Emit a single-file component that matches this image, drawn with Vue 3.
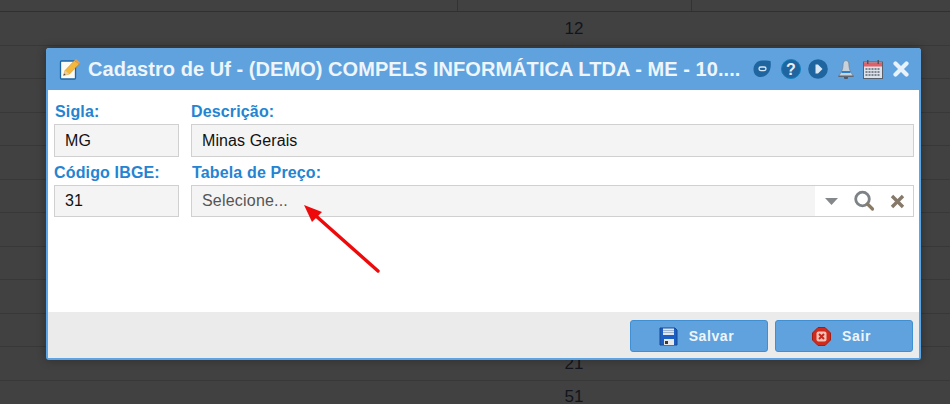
<template>
  <div class="page">
    <div class="table">
      <div class="row head">
        <div class="cell c1"></div>
        <div class="cell c2"></div>
        <div class="cell c3"></div>
      </div>
      <div v-for="(r, i) in rows" :key="i" class="row">
        <div class="num">{{ r }}</div>
      </div>
    </div>

    <div class="dialog">
      <div class="title">
        <svg class="ico-edit" width="22" height="22" viewBox="0 0 22 22">
          <rect x="1.500" y="3" width="15" height="18" rx="1" fill="#fbfbf6" stroke="#1c66a6" stroke-width="1.300" />
          <path d="M4.500 17.500l1.500-5L15.500 2.500 20 6l-9.500 10z" fill="#f3b83c" stroke="#c78a25" stroke-width=".5" />
          <path d="M15.500 2.500l1.500-1.500 4 3.500L20 6z" fill="#ec9c4e" />
          <path d="M4.500 17.500l1.500-5 4.500 3.500z" fill="#e8cfa0" />
          <path d="M4.500 17.500l.6-2 1.600 1.200z" fill="#5a4630" />
        </svg>
        <span class="title-text">Cadastro de Uf - (DEMO) COMPELS INFORMÁTICA LTDA - ME - 10....</span>
        <div class="tools">
          <svg width="18" height="18" viewBox="0 0 18 18">
            <path d="M9 .5c3 0 6-.5 8.500.5.500 3 .500 7-1 10-2 4-6 6.500-10 6C2.500 16.500.5 13 .5 9.500.5 4.500 4 .5 9 .5z" fill="#1f659f" />
            <rect x="6" y="7" width="7" height="3.600" rx="1.800" fill="none" stroke="#dce9f4" stroke-width="1.300" />
          </svg>
          <svg class="t-help" width="20" height="20" viewBox="0 0 20 20">
            <circle cx="10" cy="10" r="9.500" fill="#1f659f" stroke="#1180bd" />
            <text x="10" y="16" text-anchor="middle" class="q">?</text>
          </svg>
          <svg class="t-play" width="20" height="20" viewBox="0 0 20 20">
            <circle cx="10" cy="10" r="9.800" fill="#1f659f" />
            <path d="M7.500 5.500h2.500l4.500 4.500-4.500 4.500H7.500z" fill="#dbe9f5" />
          </svg>
          <svg class="t-bell" width="16" height="19" viewBox="0 0 16 19">
            <rect x="6" y="16" width="4" height="3" rx="1" fill="#4f5a66" />
            <path d="M8 .5c2.500 0 3 2.500 3 5.500 0 4 2.500 7 4.500 10.500H.5C2.500 13 5 10 5 6c0-3 .5-5.500 3-5.500z" fill="#c9d2da" stroke="#76818c" stroke-width=".7" />
            <rect x="3.500" y="11" width="9" height="2" fill="#2a7fd0" />
            <rect x=".5" y="15.500" width="15" height="1.500" fill="#5d6874" />
          </svg>
          <svg class="t-cal" width="20" height="19" viewBox="0 0 20 19">
            <rect x=".5" y="2" width="19" height="16.500" fill="#dde3ea" stroke="#59626c" />
            <rect x="1" y="2.500" width="18" height="4" fill="#e05f68" />
            <rect x="4" y="0" width="1.500" height="4" fill="#4e565f" />
            <rect x="14.500" y="0" width="1.500" height="4" fill="#4e565f" />
            <path d="M2.500 9h15M2.500 12h15M2.500 15h15" stroke="#5d6773" stroke-width="1.500" stroke-dasharray="2 1" />
          </svg>
          <svg class="t-close" width="16" height="16" viewBox="0 0 16 16">
            <path d="M2.500 2.500l11 11M13.500 2.500l-11 11" stroke="#e8f2fb" stroke-width="4.200" stroke-linecap="round" />
          </svg>
        </div>
      </div>

      <div class="body">
        <div class="form">
          <div class="field">
            <label class="lbl l-sigla">Sigla:</label>
            <div class="input">MG</div>
          </div>
          <div class="field">
            <label class="lbl">Descrição:</label>
            <div class="input">Minas Gerais</div>
          </div>
          <div class="field">
            <label class="lbl l-low">Código IBGE:</label>
            <div class="input i-low">31</div>
          </div>
          <div class="field">
            <label class="lbl l-low l-tab">Tabela de Preço:</label>
            <div class="select">
              <div class="select-val">Selecione...</div>
              <div class="select-btns">
                <svg width="13" height="7" viewBox="0 0 13 7"><path d="M0 0h13L6.500 7z" fill="#85888a" /></svg>
                <svg width="22" height="22" viewBox="0 0 22 22">
                  <circle cx="9.500" cy="9" r="6.800" fill="none" stroke="#7d8286" stroke-width="2.800" />
                  <path d="M14.500 14l5 5" stroke="#8a7b66" stroke-width="3.200" stroke-linecap="round" />
                </svg>
                <svg width="15" height="15" viewBox="0 0 15 15">
                  <path d="M2 2l11 11M13 2L2 13" stroke="#85796a" stroke-width="3.400" />
                </svg>
              </div>
            </div>
          </div>
        </div>
      </div>

      <div class="footer">
        <button class="btn">
          <svg width="19" height="19" viewBox="0 0 19 19">
            <path d="M1 1h15l2 2v15H1z" fill="#1c5fc4" stroke="#174a90" />
            <rect x="4" y="1.500" width="11" height="6.500" fill="#dfe6ee" />
            <path d="M4 3.500h11M4 5.500h11" stroke="#9fb3c9" />
            <rect x="5" y="12" width="10" height="6" fill="#e8e8e8" />
            <rect x="6" y="14" width="3" height="3" fill="#3a3a3a" />
          </svg>
          <span>Salvar</span>
        </button>
        <button class="btn">
          <svg width="19" height="19" viewBox="0 0 19 19">
            <path d="M6 .5h7L18.500 6v7L13 18.500H6L.5 13V6z" fill="#cf2a1c" stroke="#a51e12" />
            <rect x="4.500" y="4.500" width="10" height="10" rx="2" fill="#f4c3b8" />
            <path d="M7 7l5 5M12 7l-5 5" stroke="#c8281c" stroke-width="2" />
          </svg>
          <span>Sair</span>
        </button>
      </div>

      <svg class="arrow" width="90" height="80" viewBox="0 0 90 80">
        <path d="M76 67L14 12" stroke="#ee0a0a" stroke-width="3.400" stroke-linecap="round" />
        <path d="M2 1l18 7-10 10z" fill="#ee0a0a" />
      </svg>
    </div>
  </div>
</template>

<script setup>
const rows = ['12', '', '', '', '', '', '', '', '', '', '21', '51']
</script>

<style>
html, body {
  margin: 0;
  background: #414141;
}
</style>

<style scoped>
.page {
  position: relative;
  width: 950px;
  height: 404px;
  overflow: hidden;
  background: #414141;
  font-family: "Liberation Sans", Arial, sans-serif;
}

.table {
  display: flex;
  flex-direction: column;
}

.row {
  height: 33.5px;
  flex-shrink: 0;
  box-sizing: border-box;
  border-bottom: 1px solid #383838;
  display: flex;
  align-items: center;
  justify-content: center;
}

.head {
  height: 12px;
  border-bottom: 1px solid #303030;
  justify-content: flex-start;
  align-items: stretch;
}

.c1 { width: 458px; border-right: 1px solid #333; box-sizing: border-box; }
.c2 { width: 234px; border-right: 1px solid #333; box-sizing: border-box; }

.num {
  font-size: 17px;
  line-height: 14px;
  color: #12151c;
  padding-left: 198px;
  padding-top: 1px;
}

.dialog {
  position: absolute;
  left: 46px;
  top: 48px;
  width: 875px;
  height: 312px;
  box-sizing: border-box;
  border: 2px solid #5aa5e6;
  border-top: 0;
  border-radius: 3px;
  background: #fff;
  display: flex;
  flex-direction: column;
  box-shadow: 0 0 10px rgba(0, 0, 0, 0.3);
}

.title {
  height: 42px;
  margin: 0 -2px;
  background: #5fa2de;
  display: flex;
  align-items: center;
  padding: 0 12px 0 13px;
  flex-shrink: 0;
  border-radius: 3px 3px 0 0;
}

.ico-edit {
  flex-shrink: 0;
}

.title-text {
  margin-left: 7px;
  flex: 1;
  color: #eef5fb;
  font-size: 20px;
  font-weight: bold;
  letter-spacing: 0.05px;
  white-space: nowrap;
  overflow: hidden;
}

.tools {
  display: flex;
  align-items: center;
  margin-left: 8px;
}

.t-help { margin-left: 10px; }
.t-play { margin-left: 7px; }
.t-bell { margin-left: 10px; }
.t-cal { margin-left: 9px; }
.t-close { margin-left: 10px; }

.q {
  font-family: "Liberation Sans", Arial, sans-serif;
  font-size: 16px;
  font-weight: bold;
  fill: #e6f0f8;
}

.body {
  flex: 1;
  padding: 0 6px;
}

.form {
  display: grid;
  grid-template-columns: 125px 723px;
  column-gap: 12px;
  padding-top: 10px;
  row-gap: 5px;
}

.lbl {
  display: block;
  height: 24px;
  color: #2584d2;
  font-size: 16px;
  font-weight: bold;
  line-height: 24px;
  letter-spacing: 0.15px;
}

.l-sigla { padding-left: 1px; }
.l-low { height: 23px; line-height: 22px; }
.l-tab { padding-left: 1px; }

.input {
  height: 33px;
  box-sizing: border-box;
  border: 1px solid #d0d0d0;
  background: #f4f4f4;
  color: #111;
  font-size: 16px;
  line-height: 31px;
  padding-left: 10px;
  letter-spacing: 0.1px;
}

.i-low {
  height: 32px;
  line-height: 30px;
}

.select {
  height: 32px;
  box-sizing: border-box;
  border: 1px solid #d0d0d0;
  display: flex;
}

.select-val {
  flex: 1;
  background: #f4f4f4;
  color: #555;
  font-size: 16px;
  line-height: 30px;
  padding-left: 10px;
  letter-spacing: 0.2px;
}

.select-btns {
  width: 98px;
  background: #fff;
  display: flex;
  align-items: center;
  gap: 15px;
  padding-left: 10px;
  box-sizing: border-box;
}

.footer {
  height: 46px;
  flex-shrink: 0;
  background: #ebebeb;
  display: flex;
  justify-content: flex-end;
  align-items: flex-start;
  gap: 7px;
  padding: 8px 6px 0 0;
  box-sizing: border-box;
}

.btn {
  width: 138px;
  height: 32px;
  box-sizing: border-box;
  border: 1px solid #3f8fd2;
  border-radius: 3px;
  background: #5fa2de;
  color: #eef5fb;
  font-family: inherit;
  font-size: 14px;
  font-weight: bold;
  letter-spacing: 0.6px;
  display: flex;
  align-items: center;
  justify-content: center;
  gap: 11px;
  padding: 0 5px 0 0;
}

.arrow {
  position: absolute;
  left: 254px;
  top: 156px;
}
</style>
